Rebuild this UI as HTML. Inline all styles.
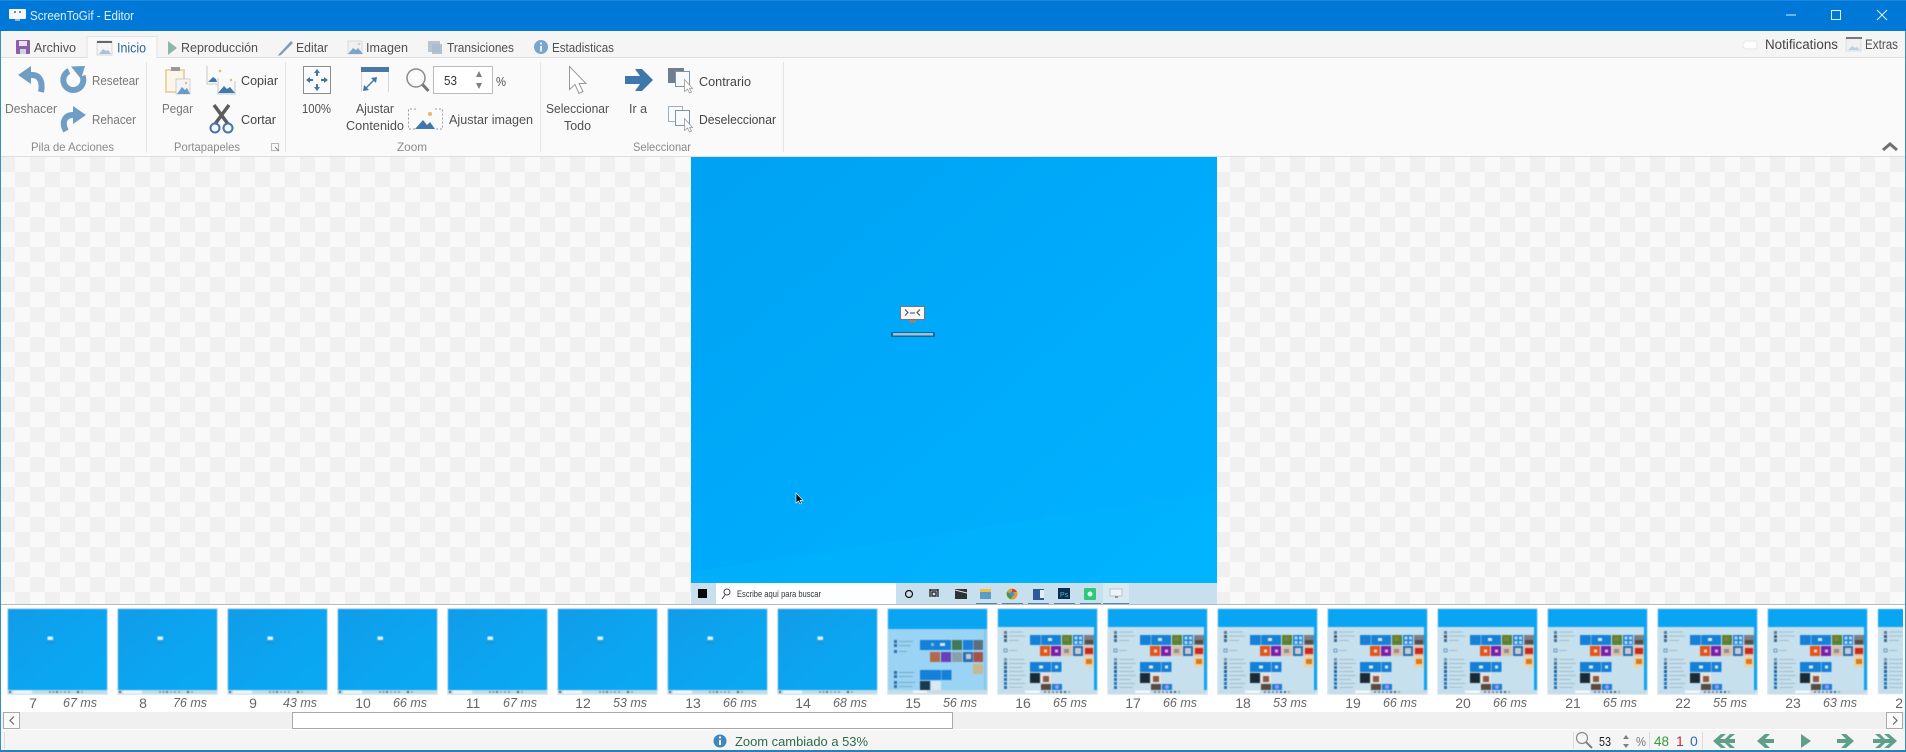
<!DOCTYPE html>
<html lang="es">
<head>
<meta charset="utf-8">
<title>ScreenToGif - Editor</title>
<style>
html,body{margin:0;padding:0;width:1906px;height:752px;overflow:hidden;background:#fff}
svg{display:block}
text{font-family:"Liberation Sans",sans-serif;font-size:13px;fill:#444}
.r{fill:#505050}
.d{fill:#777}
.g{fill:#8a8a8a;font-size:12px}
.n{fill:#666;font-size:14px;text-anchor:middle}
.m{fill:#666;font-size:12.5px;font-style:italic;text-anchor:end}
.soft{filter:blur(.45px)}
.soft2{filter:blur(.35px)}
</style>
</head>
<body>
<svg width="1906" height="752" viewBox="0 0 1906 752" xmlns="http://www.w3.org/2000/svg">
<defs>
<pattern id="chk" x="0" y="157" width="30" height="30" patternUnits="userSpaceOnUse">
<rect width="30" height="30" fill="#f9f9f9"/>
<rect width="15" height="15" fill="#f0f0f0"/>
<rect x="15" y="15" width="15" height="15" fill="#f0f0f0"/>
</pattern>
<linearGradient id="desk" x1="0" y1="0" x2="1" y2="1">
<stop offset="0" stop-color="#00a2f2"/>
<stop offset=".5" stop-color="#00aafb"/>
<stop offset="1" stop-color="#00b3ff"/>
</linearGradient>
<linearGradient id="tdesk" x1="0" y1="0" x2="1" y2="1">
<stop offset="0" stop-color="#129ce8"/>
<stop offset=".6" stop-color="#0ba6f2"/>
<stop offset="1" stop-color="#0aa8f3"/>
</linearGradient>
<clipPath id="edge"><rect x="0" y="600" width="1903" height="120"/></clipPath>

<symbol id="tA" width="99" height="85" viewBox="0 0 99 85">
<rect width="99" height="85" fill="url(#tdesk)"/>
<rect x="0" y="81" width="99" height="4" fill="#bfdcec"/>
<rect x="5" y="81.500" width="19" height="3" fill="#eef6fb"/>
<rect x="1" y="82" width="2" height="2" fill="#4a6a80"/>
<rect x="39.500" y="27.500" width="5.500" height="3.500" fill="#dff2fb"/>
<rect x="38.500" y="33.500" width="7.500" height="1" fill="#2f83b8"/>
<rect x="41" y="82" width="2" height="2" fill="#7d9fb4"/><rect x="44.500" y="82" width="2" height="2" fill="#7d9fb4"/><rect x="48" y="82" width="2" height="2" fill="#5a7a8e"/><rect x="52" y="82" width="2" height="2" fill="#8fb0c6"/><rect x="56" y="82" width="2" height="2" fill="#7ea5c0"/><rect x="60" y="82" width="2" height="2" fill="#7ea5c0"/><rect x="69" y="82" width="2" height="2" fill="#3f5f78"/><rect x="73" y="82" width="2" height="2" fill="#7fc09a"/>
</symbol>

<symbol id="tB" width="99" height="85" viewBox="0 0 99 85">
<rect width="99" height="85" fill="#0aa5f2"/>
<rect y="18" width="96" height="67" fill="#c6e0ee"/>
<rect y="81" width="99" height="4" fill="#c5dcea"/>
<rect x="27" y="81.500" width="15" height="2.500" fill="#f5fafc"/>
<rect x="6" y="22" width="3" height="3" fill="#5b7d99"/><rect x="6" y="26" width="3" height="3" fill="#3a5a77"/><rect x="6" y="30" width="3" height="3" fill="#3a6a99"/>
<g fill="#a2bccb"><rect x="11" y="22.500" width="14" height="1"/><rect x="11" y="26.500" width="16" height="1"/><rect x="11" y="31" width="10" height="1"/><rect x="11" y="41" width="8" height="1"/><rect x="11" y="50" width="15" height="1"/><rect x="11" y="54" width="17" height="1"/><rect x="11" y="58" width="13" height="1"/><rect x="11" y="62" width="15" height="1"/><rect x="11" y="66" width="17" height="1"/><rect x="11" y="70" width="12" height="1"/><rect x="11" y="74" width="16" height="1"/><rect x="11" y="78" width="14" height="1"/></g>
<rect x="6" y="40" width="3" height="3" fill="none" stroke="#5a8ab0" stroke-width=".8"/>
<rect x="6" y="49" width="3" height="3" fill="#6c9bc0"/><rect x="6" y="53" width="3" height="3" fill="#4a6c8c"/><rect x="6" y="57" width="3" height="3" fill="#2f6da3"/><rect x="6" y="61" width="3" height="3" fill="#2a5f90"/><rect x="6" y="65" width="3" height="3" fill="#1b78c8"/><rect x="6" y="69" width="3" height="3" fill="#2f6da3"/><rect x="6" y="73" width="3" height="3" fill="#1b78c8"/><rect x="6" y="77" width="3" height="3" fill="#2f6da3"/>
<rect x="32" y="26" width="31" height="10" fill="#1480d8"/>
<rect x="42.500" y="26" width="1" height="10" fill="#6aaee0"/>
<rect x="50" y="29" width="4" height="3" fill="#d8ecf8"/>
<rect x="64" y="26" width="10" height="10" fill="#55832f"/><rect x="66" y="28" width="5" height="4" fill="#82803a"/>
<rect x="75" y="26" width="10" height="10" fill="#1480d8"/>
<g fill="#b8daf2"><rect x="76.500" y="27.500" width="3" height="3"/><rect x="81" y="27.500" width="3" height="3"/><rect x="76.500" y="32" width="3" height="3"/><rect x="81" y="32" width="3" height="3"/></g>
<rect x="86" y="26" width="10" height="10" fill="#7a8088"/><rect x="87" y="31" width="8" height="4" fill="#5a4a44"/>
<rect x="42" y="37" width="10" height="10" fill="#e2541a"/>
<rect x="53" y="37" width="10" height="10" fill="#7a1fa8"/>
<rect x="46" y="40.500" width="3" height="3" fill="#f8d8c8"/><rect x="57" y="40.500" width="3" height="3" fill="#d8b8ea"/>
<rect x="64" y="37" width="10" height="10" fill="#dcc0a6"/><rect x="66" y="40" width="5" height="4" fill="#8d8f98"/>
<rect x="75" y="37" width="10" height="10" fill="#2e6cae"/><rect x="77" y="39" width="6" height="6" fill="#c2ccd6"/>
<rect x="86" y="37" width="10" height="10" fill="#e8c0a0"/><rect x="87" y="39" width="8" height="6" fill="#c8281e"/>
<rect x="86" y="48" width="10" height="10" fill="#f0d0a0"/><rect x="88" y="50" width="6" height="5" fill="#d8781e"/>
<rect x="32" y="53" width="21" height="10" fill="#1480d8"/><rect x="53.500" y="53" width="10" height="10" fill="#1480d8"/>
<rect x="41" y="56.500" width="4" height="3" fill="#d8ecf8"/><rect x="57" y="56.500" width="3" height="3" fill="#d8ecf8"/>
<rect x="32" y="64" width="10" height="10" fill="#1a2a35"/><rect x="43" y="64" width="10" height="10" fill="#eae2da"/><rect x="45" y="67" width="6" height="6" fill="#8a5a48"/>
<rect x="43" y="75" width="10" height="6" fill="#5a4a40"/><rect x="54" y="75" width="10" height="6" fill="#1480d8"/>
<circle cx="59" cy="78" r="2" fill="#b090f0"/>
<g fill="#6f8da0"><rect x="46" y="82" width="2" height="2"/><rect x="50" y="82" width="2" height="2"/><rect x="54" y="82" width="2" height="2"/><rect x="58" y="82" width="2" height="2"/><rect x="62" y="82" width="2" height="2" fill="#3c5f90"/><rect x="66" y="82" width="2" height="2" fill="#3f5f78"/><rect x="70" y="82" width="2" height="2" fill="#7fc09a"/></g>
</symbol>

<symbol id="tC" width="99" height="85" viewBox="0 0 99 85">
<rect width="99" height="85" fill="#0aa5f2"/>
<rect y="20" width="99" height="65" fill="#85c8f0"/>
<rect y="20" width="96" height="61" fill="#9ad3f3"/>
<rect y="81" width="99" height="4" fill="#c5dcea"/>
<rect x="25" y="81.500" width="14" height="2.500" fill="#eef6fb"/>
<rect x="32" y="31" width="31" height="10" fill="#1480d8"/><rect x="52" y="34" width="5" height="3" fill="#d8ecf8"/><rect x="43" y="34" width="3" height="3" fill="#7fbdea"/>
<rect x="64" y="31" width="10" height="10" fill="#3f7a58"/><rect x="75" y="31" width="10" height="10" fill="#1a80d8"/><rect x="85.500" y="31" width="9.500" height="10" fill="#5a7080"/>
<rect x="42" y="43" width="10" height="10" fill="#b06a48"/><rect x="53" y="43" width="10" height="10" fill="#6a40b8"/>
<rect x="64" y="43" width="10" height="10" fill="#8aa0a8"/><rect x="75" y="43" width="10" height="10" fill="#2e6cae"/><rect x="78" y="45" width="5" height="5" fill="#c2ccd6"/><rect x="85.500" y="43" width="9.500" height="10" fill="#a8504a"/>
<rect x="85" y="55" width="10" height="10" fill="#c8b890"/>
<rect x="32" y="61" width="21" height="10" fill="#1480d8"/><rect x="53.500" y="61" width="10" height="10" fill="#1480d8"/>
<rect x="32" y="72" width="10" height="9" fill="#1a3a50"/><rect x="43" y="72" width="10" height="9" fill="#dce8f0"/>
<g fill="#2f6da3"><rect x="6" y="31" width="3" height="3"/><rect x="6" y="35" width="3" height="3"/><rect x="6" y="41" width="3" height="3"/><rect x="6" y="62" width="3" height="3"/><rect x="6" y="66" width="3" height="3"/><rect x="6" y="72" width="3" height="3"/><rect x="6" y="76" width="3" height="3"/></g>
<g fill="#78a8c8"><rect x="11" y="32" width="14" height="1"/><rect x="11" y="36" width="12" height="1"/><rect x="11" y="42" width="8" height="1"/><rect x="11" y="63" width="15" height="1"/><rect x="11" y="67" width="14" height="1"/><rect x="11" y="73" width="16" height="1"/><rect x="11" y="77" width="13" height="1"/></g>
</symbol>
</defs>

<!-- window -->
<rect width="1906" height="752" fill="#fff"/>

<!-- title bar -->
<rect width="1906" height="31" fill="#0078d7"/>
<rect width="1906" height="1" fill="#1a88e0"/>
<rect x="9" y="9" width="17" height="10" rx="1" fill="#f4f8fc"/>
<rect x="15" y="19" width="5" height="2" fill="#9fb6c8"/>
<circle cx="15" cy="12" r=".9" fill="#333"/><circle cx="20" cy="12" r=".9" fill="#333"/>
<text x="30" y="20" style="fill:#dff0ff;font-size:13px" textLength="104" lengthAdjust="spacingAndGlyphs">ScreenToGif - Editor</text>
<path d="M1786 15h10" stroke="#d8ecff" stroke-width="1"/>
<rect x="1831.500" y="10.500" width="9" height="9" fill="none" stroke="#e4f2ff"/>
<path d="M1877 10l10 10M1887 10l-10 10" stroke="#e4f2ff" stroke-width="1"/>

<!-- tab row -->
<rect y="31" width="1906" height="26" fill="#f5f5f5"/>
<rect y="57" width="1906" height="1" fill="#dedede"/>
<path d="M87 58V36.500H157V58" fill="#fafafa" stroke="#e2e2e2"/>

<!-- Tab icons -->
<rect x="16" y="40" width="14" height="14" rx="1" fill="#8b5ea8"/>
<rect x="19" y="41" width="8" height="5" fill="#e9e1ef"/>
<rect x="20" y="49" width="6" height="5" fill="#cfd5dd"/>
<text x="34" y="52" class="r" textLength="42" lengthAdjust="spacingAndGlyphs">Archivo</text>

<rect x="97" y="41" width="15" height="14" fill="#f3f5f7" stroke="#c8ccd0" stroke-width=".7"/>
<rect x="97" y="41" width="15" height="2" fill="#666"/>
<path d="M99 54l4-5 3 2 2-1 3 4z" fill="#a9c2d8"/>
<text x="117" y="52.500" style="fill:#2d6495;font-size:13.500px" textLength="29" lengthAdjust="spacingAndGlyphs">Inicio</text>

<path d="M168 41l9 7-9 7z" fill="#8db8a5"/>
<text x="181" y="52" class="r" textLength="77" lengthAdjust="spacingAndGlyphs">Reproducción</text>

<path d="M279 54l12-13 2 2-12 12-3 1z" fill="#7f9cba"/>
<text x="296" y="52" class="r" textLength="32" lengthAdjust="spacingAndGlyphs">Editar</text>

<rect x="348" y="41" width="14" height="13" fill="#eef1f3" stroke="#c9ced2" stroke-width=".6"/>
<path d="M348 54l5-6 3 2 2-2 5 6z" fill="#7fa5c6"/>
<circle cx="359" cy="44" r="1.200" fill="#eac9a0"/>
<text x="366" y="52" class="r" textLength="42" lengthAdjust="spacingAndGlyphs">Imagen</text>

<rect x="428" y="41" width="12" height="11" fill="#b9c4cf"/>
<rect x="432" y="44" width="10" height="10" fill="#a9bccd" opacity=".9"/>
<text x="447" y="52" class="r" textLength="67" lengthAdjust="spacingAndGlyphs">Transiciones</text>

<circle cx="541" cy="47" r="7" fill="#7aa5cf"/>
<rect x="540" y="46" width="2" height="5.500" fill="#e8f0f8"/><rect x="540" y="42.500" width="2" height="2" fill="#e8f0f8"/>
<text x="552" y="52" class="r" textLength="62" lengthAdjust="spacingAndGlyphs">Estadisticas</text>

<path d="M1746 41h11v8h-11l-3-2v-4z" fill="#fff" stroke="#e6e6e6"/>
<text x="1765" y="49" style="fill:#444;font-size:13.500px" textLength="73" lengthAdjust="spacingAndGlyphs">Notifications</text>
<rect x="1846" y="38" width="15" height="13" fill="#eef0f2" stroke="#ccd0d4" stroke-width=".6"/>
<rect x="1846" y="37" width="16" height="2" fill="#777"/>
<path d="M1848 50l4-4 3 2 2-1 3 3z" fill="#bcd0e0"/>
<text x="1865" y="49" class="r" style="font-size:13.500px" textLength="33" lengthAdjust="spacingAndGlyphs">Extras</text>

<!-- ribbon -->
<rect y="58" width="1906" height="98" fill="#fafafa"/>
<rect y="156" width="1906" height="1" fill="#dedede"/>
<g fill="#e4e4e4">
<rect x="146" y="62" width="1" height="90"/><rect x="285" y="62" width="1" height="90"/><rect x="540" y="62" width="1" height="90"/><rect x="783" y="62" width="1" height="90"/>
</g>

<!-- undo -->
<path d="M18 75L31 66V84Z" fill="#6e9dc6"/>
<path d="M28 75H32C40 75 43 82 41 92" fill="none" stroke="#6e9dc6" stroke-width="6"/>
<!-- reset -->
<path d="M69 71A10 10 0 1 0 82.500 76" fill="none" stroke="#6e9dc6" stroke-width="6"/>
<path d="M71 66.500L85 66L81 79Z" fill="#6e9dc6"/>
<!-- redo -->
<path d="M86 115L73 106V124Z" fill="#6e9dc6"/>
<path d="M76 115H73C65 115 61 122 66 131" fill="none" stroke="#6e9dc6" stroke-width="6"/>
<text x="92" y="85" class="d" textLength="47" lengthAdjust="spacingAndGlyphs">Resetear</text>
<text x="92" y="124" class="d" textLength="44" lengthAdjust="spacingAndGlyphs">Rehacer</text>
<text x="5" y="113" class="d" textLength="52" lengthAdjust="spacingAndGlyphs">Deshacer</text>
<text x="31" y="151" class="g" textLength="83" lengthAdjust="spacingAndGlyphs">Pila de Acciones</text>

<!-- paste -->
<rect x="166" y="70" width="18" height="22" fill="#fbf6e8" stroke="#e7d7a8" stroke-width="2"/>
<rect x="171" y="67" width="9" height="4" fill="#9a9a9a"/>
<rect x="176" y="79" width="14" height="15" fill="#f2f4f6" stroke="#b9bfc4" stroke-width=".7"/>
<path d="M177 94l5-7 3 3 2-2 3 6z" fill="#6c9ac4"/>
<circle cx="186" cy="83" r="1.200" fill="#eab670"/>
<text x="162" y="113" class="d" textLength="31" lengthAdjust="spacingAndGlyphs">Pegar</text>

<!-- copy -->
<path d="M207 66v18h10" fill="none" stroke="#c4c8cc"/>
<path d="M208 82l5-5 3 2 1 3z" fill="#3f77ad"/>
<circle cx="220" cy="71" r="1.300" fill="#eab670"/>
<path d="M218 78v16h17V81" fill="#f6f7f8" stroke="#c4c8cc"/>
<path d="M218 93l6-7 3 3 3-2 5 6z" fill="#3f77ad"/>
<circle cx="231" cy="80" r="1.300" fill="#eab670"/>
<text x="241" y="85" style="fill:#444" textLength="37" lengthAdjust="spacingAndGlyphs">Copiar</text>

<!-- scissors -->
<path d="M214 105l14 19M229 105l-14 19" stroke="#5c5c5c" stroke-width="3.500" fill="none"/>
<circle cx="215" cy="128" r="4.500" fill="none" stroke="#3f77ad" stroke-width="2"/>
<circle cx="228" cy="128" r="4.500" fill="none" stroke="#3f77ad" stroke-width="2"/>
<text x="241" y="124" style="fill:#444" textLength="35" lengthAdjust="spacingAndGlyphs">Cortar</text>

<text x="174" y="151" class="g" textLength="66" lengthAdjust="spacingAndGlyphs">Portapapeles</text>
<rect x="271.500" y="143.500" width="7" height="7" fill="none" stroke="#b5b5b5"/>
<path d="M275 147l4 4" stroke="#888"/>

<!-- 100% -->
<rect x="303.500" y="66.500" width="27" height="27" fill="#fbfbfb" stroke="#8a8f94"/>
<g fill="#3f77ad">
<path d="M317 69l3 4h-2v3h-2v-3h-2z"/>
<path d="M317 91l3-4h-2v-3h-2v3h-2z"/>
<path d="M306 80l4-3v2h3v2h-3v2z"/>
<path d="M328 80l-4-3v2h-3v2h3v2z"/>
</g>
<text x="302" y="113" class="r" textLength="29" lengthAdjust="spacingAndGlyphs">100%</text>

<!-- fit -->
<path d="M361.500 71v21M388.500 71v21" stroke="#d6d6d6" fill="none"/>
<rect x="361" y="67" width="28" height="5" fill="#4a78a6"/>
<path d="M363 91l6-1-2-2 7-7 2 2 1-6-6 1 2 2-7 7-2-2z" fill="#3f77ad"/>
<text x="356" y="113" class="r" textLength="38" lengthAdjust="spacingAndGlyphs">Ajustar</text>
<text x="346" y="130" class="r" textLength="58" lengthAdjust="spacingAndGlyphs">Contenido</text>

<!-- magnifier -->
<circle cx="416" cy="78" r="9" fill="none" stroke="#8a8a8a" stroke-width="1.500"/>
<path d="M422.500 84.500l6 6.500" stroke="#777" stroke-width="3"/>
<rect x="433.500" y="66.500" width="59" height="27" fill="#fff" stroke="#bbb"/>
<text x="444" y="85" style="fill:#333" textLength="13" lengthAdjust="spacingAndGlyphs">53</text>
<path d="M479 71l-3 6h6zM476 83l3 6 3-6z" fill="#808080"/>
<text x="496" y="86" class="r" textLength="10" lengthAdjust="spacingAndGlyphs">%</text>

<!-- fit image -->
<path d="M416 109h-7.500v20h7.500M435 109h7.500v20h-7.500" fill="none" stroke="#9a9a9a" stroke-dasharray="2 2"/>
<path d="M415 129l8-9 4 5 3-3 5 7z" fill="#3f77ad"/>
<circle cx="430" cy="114" r="2" fill="#eab670"/>
<text x="449" y="124" class="r" textLength="84" lengthAdjust="spacingAndGlyphs">Ajustar imagen</text>

<text x="397" y="151" class="g" textLength="30" lengthAdjust="spacingAndGlyphs">Zoom</text>

<!-- cursor big -->
<path d="M569.500 66.500v23l5.500-5 4 9 4-2-4-8h7z" fill="#fff" stroke="#9a9a9a"/>
<text x="546" y="113" class="r" textLength="63" lengthAdjust="spacingAndGlyphs">Seleccionar</text>
<text x="564" y="130" class="r" textLength="27" lengthAdjust="spacingAndGlyphs">Todo</text>

<!-- go to -->
<path d="M625 76h15l-5-7h7l11 11-11 11h-7l5-7h-15z" fill="#3f77ad"/>
<text x="629" y="113" class="r" textLength="18" lengthAdjust="spacingAndGlyphs">Ir a</text>

<!-- contrario -->
<rect x="668" y="68" width="16" height="15" fill="#6f7f90"/>
<rect x="675.500" y="71.500" width="14" height="15" fill="#f8fafb" stroke="#7d93a8"/>
<path d="M684.500 79.500v12l3-2.500 2 4 2-1-2-3.500h3z" fill="#fff" stroke="#9a9a9a" stroke-width=".8"/>
<text x="699" y="86" style="fill:#444" textLength="52" lengthAdjust="spacingAndGlyphs">Contrario</text>
<!-- deselect -->
<rect x="668.500" y="106.500" width="14" height="15" fill="#f8fafb" stroke="#9db0c2"/>
<rect x="675.500" y="110.500" width="14" height="15" fill="#f8fafb" stroke="#7d93a8"/>
<path d="M684.500 118.500v12l3-2.500 2 4 2-1-2-3.500h3z" fill="#fff" stroke="#9a9a9a" stroke-width=".8"/>
<text x="699" y="124" style="fill:#444" textLength="77" lengthAdjust="spacingAndGlyphs">Deseleccionar</text>
<text x="633" y="151" class="g" textLength="58" lengthAdjust="spacingAndGlyphs">Seleccionar</text>

<path d="M1883 150l7-6 7 6" fill="none" stroke="#707070" stroke-width="3"/>

<!-- canvas -->
<rect x="0" y="157" width="1906" height="447" fill="url(#chk)"/>
<rect x="691" y="157" width="526" height="426" fill="url(#desk)"/>
<path d="M691 583V572L1217 492V583z" fill="#00b6ff" opacity=".35"/>
<g class="soft2">
<rect x="900.500" y="306.500" width="24" height="13" fill="#f6f7f8" stroke="#777"/>
<path d="M905 309.500l3 3-3 3M920 309.500l-3 3 3 3M910 313h5" stroke="#444" fill="none"/>
<rect x="909" y="320" width="7" height="3" fill="#888"/>
<rect x="891" y="332" width="44" height="5" fill="#0d6a9e"/>
<rect x="893" y="333" width="40" height="2.500" fill="#dce8ee" opacity=".7" />
</g>
<path d="M796 493v10l2.500-2 1.500 3 1.500-.7-1.500-3h3z" fill="#111" stroke="#fff" stroke-width=".6"/>

<!-- taskbar -->
<rect x="691" y="583" width="526" height="21" fill="#c8e0ee"/>
<rect x="698" y="589" width="9" height="9" fill="#0a0a0a"/>
<rect x="716" y="583" width="180" height="21" fill="#fdfeff"/>
<circle cx="727" cy="592" r="3" fill="none" stroke="#444"/><path d="M725 595l-3 4" stroke="#444"/>
<text x="737" y="597" style="fill:#333;font-size:9px" textLength="84" lengthAdjust="spacingAndGlyphs">Escribe aquí para buscar</text>
<circle cx="909" cy="594" r="3.500" fill="none" stroke="#111" stroke-width="1.200"/>
<path d="M930 589v8M938 589v8M930 590h8M932 592h4v4h-4z" stroke="#111" fill="none" stroke-width="1.200"/>
<rect x="955" y="589" width="12" height="10" fill="#2c3338"/><path d="M955 590l12 3" stroke="#e0e6e8"/>
<rect x="980" y="589" width="11" height="3" fill="#f0c040"/><rect x="980" y="592" width="11" height="7" fill="#5a9ec8"/>
<circle cx="1012" cy="594" r="5.500" fill="#d8a030"/><path d="M1012 589a5.500 5.500 0 0 1 5 3h-5z" fill="#d44030"/><path d="M1007 592a5.500 5.500 0 0 0 4 7l2-4z" fill="#3c9a50"/><circle cx="1012" cy="594" r="2.200" fill="#4a88e0"/>
<rect x="1033" y="589" width="11" height="11" fill="#2b5a9c"/><rect x="1040" y="590" width="4" height="8" fill="#e6eef6"/>
<rect x="1058" y="588" width="12" height="11" fill="#0c2f50"/><text x="1060" y="597" style="fill:#4fb0ef;font-size:7px">Ps</text>
<rect x="1084" y="588" width="12" height="12" rx="1" fill="#2dc87a"/><circle cx="1090" cy="594" r="2.500" fill="#dff8ea"/>
<rect x="1103" y="583" width="26" height="21" fill="#d9e9f2"/>
<rect x="1110" y="589" width="12" height="7" fill="#eef4f8" stroke="#8a98a2" stroke-width=".5"/>
<rect x="1115" y="596" width="3" height="2" fill="#8a98a2"/>
<g fill="#4a88b8">
<rect x="976" y="603" width="21" height="1"/><rect x="1002" y="603" width="21" height="1"/><rect x="1028" y="603" width="21" height="1"/><rect x="1054" y="603" width="21" height="1"/><rect x="1080" y="603" width="21" height="1"/><rect x="1103" y="603" width="26" height="1"/>
</g>
<rect y="604" width="1906" height="1" fill="#b9b9b9"/>

<!-- thumbs -->
<rect y="605" width="1906" height="107" fill="#fff"/>
<g fill="#e8eef2">
<rect x="7" y="608" width="101" height="87"/><rect x="117" y="608" width="101" height="87"/><rect x="227" y="608" width="101" height="87"/><rect x="337" y="608" width="101" height="87"/><rect x="447" y="608" width="101" height="87"/><rect x="557" y="608" width="101" height="87"/><rect x="667" y="608" width="101" height="87"/><rect x="777" y="608" width="101" height="87"/><rect x="887" y="608" width="101" height="87"/><rect x="997" y="608" width="101" height="87"/><rect x="1107" y="608" width="101" height="87"/><rect x="1217" y="608" width="101" height="87"/><rect x="1327" y="608" width="101" height="87"/><rect x="1437" y="608" width="101" height="87"/><rect x="1547" y="608" width="101" height="87"/><rect x="1657" y="608" width="101" height="87"/><rect x="1767" y="608" width="101" height="87"/>
</g>
<g class="soft">
<use href="#tA" x="8" y="609"/><use href="#tA" x="118" y="609"/><use href="#tA" x="228" y="609"/><use href="#tA" x="338" y="609"/><use href="#tA" x="448" y="609"/><use href="#tA" x="558" y="609"/><use href="#tA" x="668" y="609"/><use href="#tA" x="778" y="609"/>
<use href="#tC" x="888" y="609"/>
<use href="#tB" x="998" y="609"/><use href="#tB" x="1108" y="609"/><use href="#tB" x="1218" y="609"/><use href="#tB" x="1328" y="609"/><use href="#tB" x="1438" y="609"/><use href="#tB" x="1548" y="609"/><use href="#tB" x="1658" y="609"/><use href="#tB" x="1768" y="609"/>
</g>
<g clip-path="url(#edge)"><g class="soft"><use href="#tB" x="1878" y="609"/></g></g>

<g>
<text x="33" y="708" class="n">7</text><text x="97" y="707" class="m">67 ms</text>
<text x="143" y="708" class="n">8</text><text x="207" y="707" class="m">76 ms</text>
<text x="253" y="708" class="n">9</text><text x="317" y="707" class="m">43 ms</text>
<text x="363" y="708" class="n">10</text><text x="427" y="707" class="m">66 ms</text>
<text x="473" y="708" class="n">11</text><text x="537" y="707" class="m">67 ms</text>
<text x="583" y="708" class="n">12</text><text x="647" y="707" class="m">53 ms</text>
<text x="693" y="708" class="n">13</text><text x="757" y="707" class="m">66 ms</text>
<text x="803" y="708" class="n">14</text><text x="867" y="707" class="m">68 ms</text>
<text x="913" y="708" class="n">15</text><text x="977" y="707" class="m">56 ms</text>
<text x="1023" y="708" class="n">16</text><text x="1087" y="707" class="m">65 ms</text>
<text x="1133" y="708" class="n">17</text><text x="1197" y="707" class="m">66 ms</text>
<text x="1243" y="708" class="n">18</text><text x="1307" y="707" class="m">53 ms</text>
<text x="1353" y="708" class="n">19</text><text x="1417" y="707" class="m">66 ms</text>
<text x="1463" y="708" class="n">20</text><text x="1527" y="707" class="m">66 ms</text>
<text x="1573" y="708" class="n">21</text><text x="1637" y="707" class="m">65 ms</text>
<text x="1683" y="708" class="n">22</text><text x="1747" y="707" class="m">55 ms</text>
<text x="1793" y="708" class="n">23</text><text x="1857" y="707" class="m">63 ms</text>
<g clip-path="url(#edge)"><text x="1903" y="708" class="n">24</text></g>
</g>

<!-- scrollbar -->
<rect y="712" width="1906" height="17" fill="#f0f0f0"/>
<rect x="3.500" y="712.500" width="16" height="16" fill="#fbfbfb" stroke="#aaa"/>
<path d="M14 716.500l-4 4 4 4" fill="none" stroke="#666" stroke-width="1.200"/>
<rect x="292.500" y="712.500" width="660" height="16" fill="#fff" stroke="#a8a8a8"/>
<rect x="1886.500" y="712.500" width="16" height="16" fill="#fbfbfb" stroke="#aaa"/>
<path d="M1893 716.500l4 4-4 4" fill="none" stroke="#666" stroke-width="1.200"/>

<!-- status -->
<rect y="730" width="1906" height="20" fill="#f5f5f5"/>
<rect x="4" y="732" width="1" height="17" fill="#dcdcdc"/>
<circle cx="720" cy="741" r="6.500" fill="#3f86c0"/>
<rect x="719" y="740" width="2" height="5" fill="#fff"/><rect x="719" y="736.500" width="2" height="2" fill="#fff"/>
<text x="735" y="746" style="fill:#2f6b4a;font-size:13px" textLength="133" lengthAdjust="spacingAndGlyphs">Zoom cambiado a 53%</text>

<g fill="#dcdcdc"><rect x="1573" y="732" width="1" height="17"/><rect x="1649" y="732" width="1" height="17"/><rect x="1702" y="732" width="1" height="17"/></g>
<circle cx="1582" cy="738" r="5.500" fill="none" stroke="#8a8a8a" stroke-width="1.200"/>
<path d="M1586 742l6 6" stroke="#808080" stroke-width="2"/>
<text x="1599" y="746" style="fill:#222" textLength="12" lengthAdjust="spacingAndGlyphs">53</text>
<path d="M1626 735l-3 4h6zM1623 744l3 4 3-4z" fill="#808080"/>
<text x="1636" y="746" style="fill:#777" textLength="10" lengthAdjust="spacingAndGlyphs">%</text>
<text x="1654" y="746" style="fill:#3a9a3a;font-size:14px" textLength="15" lengthAdjust="spacingAndGlyphs">48</text>
<text x="1676" y="746" style="fill:#b03030;font-size:14px">1</text>
<text x="1690" y="746" style="fill:#2f6db0;font-size:14px">0</text>

<g fill="#5f9e8a">
<path d="M1713 741l8-7h5l-6 5h5l5-5h5l-6 5h6v4h-6l6 5h-5l-5-5h-5l6 5h-5z"/>
<path d="M1757 741l8-7h5l-5 5h9v4h-9l5 5h-5z"/>
<path d="M1801 734l10 7-10 7z"/>
<path d="M1854 741l-8-7h-5l5 5h-9v4h9l-5 5h5z"/>
<path d="M1897 741l-8-7h-5l6 5h-5l-5-5h-5l6 5h-8v4h8l-6 5h5l5-5h5l-6 5h5z"/>
</g>

<!-- window border -->
<rect x="0" y="31" width="1" height="721" fill="#3a8fc0"/>
<rect x="1905" y="31" width="1" height="721" fill="#3a8fc0"/>
<rect y="750" width="1906" height="2" fill="#2a7fb5"/>
</svg>
</body>
</html>
